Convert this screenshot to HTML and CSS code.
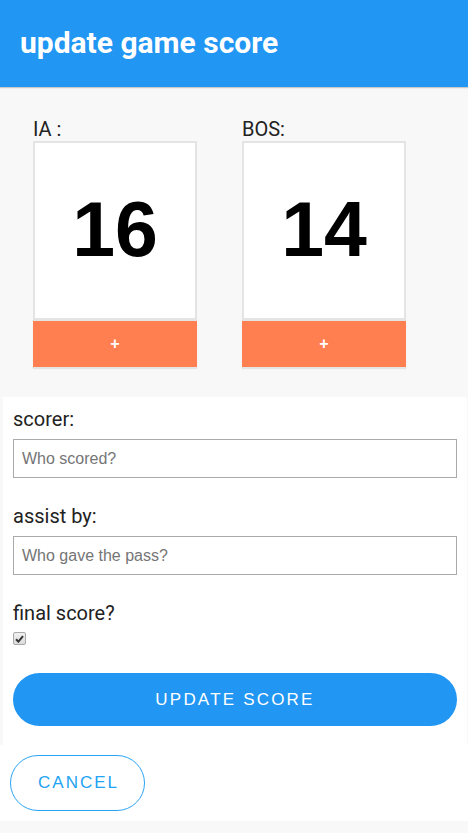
FILE: index.html
```html
<!DOCTYPE html>
<html>
<head>
<meta charset="utf-8">
<link rel="stylesheet" href="styles.css">
</head>
<body>
<header class="topbar">
  <h1 class="title">update game score</h1>
</header>
<section class="scores">
  <div class="team">
    <div class="team-name">IA :</div>
    <div class="score-box">16</div>
    <button class="plus">+</button>
  </div>
  <div class="team">
    <div class="team-name">BOS:</div>
    <div class="score-box">14</div>
    <button class="plus">+</button>
  </div>
</section>
<form class="panel">
  <label class="field-label">scorer:</label>
  <input class="text-input" type="text" placeholder="Who scored?">
  <label class="field-label">assist by:</label>
  <input class="text-input" type="text" placeholder="Who gave the pass?">
  <label class="field-label">final score?</label>
  <span class="checkbox"><svg width="9" height="8" viewBox="0 0 9 8"><path d="M1 4.2 L3.4 6.6 L8 1.2" fill="none" stroke="#333" stroke-width="2"/></svg></span>
  <button type="button" class="btn-primary">UPDATE SCORE</button>
</form>
<div class="actions">
  <button type="button" class="btn-outline">CANCEL</button>
</div>
</body>
</html>
```
FILE: styles.css
```css
* { box-sizing: border-box; }
html, body { margin: 0; padding: 0; }
body {
  background: #f8f8f8;
  font-family: Roboto, "Liberation Sans", sans-serif;
  color: #222;
  width: 468px;
}
.topbar {
  background: #2196f3;
  height: 88px;
  border-bottom: 1px solid #c9c9c9;
  box-shadow: 0 1px 1px rgba(0,0,0,0.04);
  padding: 25px 20px 0;
}
.title {
  margin: 0;
  color: #fff;
  font-family: Roboto, sans-serif;
  font-weight: 700;
  font-size: 30px;
  line-height: 36px;
}
.scores {
  display: flex;
  gap: 45px;
  padding: 29px 33px 30px;
}
.team {
  width: 164px;
  display: flex;
  flex-direction: column;
}
.team-name {
  font-size: 20px;
  line-height: 24px;
  color: #222;
}
.score-box {
  height: 180px;
  background: #fff;
  border: 2px solid #e4e4e4;
  border-bottom-width: 3px;
  display: flex;
  align-items: center;
  justify-content: center;
  font-family: "Liberation Sans", Arial, sans-serif;
  font-weight: 700;
  font-size: 77px;
  color: #000;
  padding-bottom: 2px;
}
.plus {
  height: 46px;
  border: none;
  background: #ff7f50;
  color: #fff;
  font-family: "Liberation Sans", Arial, sans-serif;
  font-weight: 700;
  font-size: 16px;
  box-shadow: 0 2px 1px rgba(0,0,0,0.08);
  padding: 0;
  margin: 0;
}
.panel {
  background: #fff;
  margin: 0 1px 0 3px;
  padding: 10px 10px 19px;
  display: flex;
  flex-direction: column;
}
.field-label {
  font-size: 20px;
  line-height: 24px;
  color: #222;
  margin-bottom: 8px;
}
.text-input {
  height: 39px;
  border: 1px solid #aaa;
  border-radius: 0;
  padding: 0 8px;
  font-family: "Liberation Sans", Arial, sans-serif;
  font-size: 16px;
  color: #222;
  margin: 0 0 26px;
  outline: none;
}
.text-input::placeholder { color: #757575; }
.checkbox {
  width: 13px;
  height: 13px;
  border: 1px solid #a9a9a9;
  border-radius: 2px;
  background: linear-gradient(#f0f0f0, #dcdcdc);
  display: flex;
  align-items: center;
  justify-content: center;
  margin-top: -1px;
  margin-bottom: 28px;
}
.btn-primary {
  height: 53px;
  border: none;
  border-radius: 27px;
  background: #2196f3;
  color: #fff;
  font-family: "Liberation Sans", Arial, sans-serif;
  font-size: 17px;
  letter-spacing: 2.2px;
  padding: 0;
}
.actions {
  background: #fff;
  padding: 10px;
}
.btn-outline {
  width: 135px;
  height: 56px;
  border: 1px solid #2aa4f4;
  border-radius: 28px;
  background: #fff;
  color: #22a3f3;
  font-family: "Liberation Sans", Arial, sans-serif;
  font-size: 17px;
  letter-spacing: 2px;
  padding: 0 0 0 2px;
  display: block;
}
```
